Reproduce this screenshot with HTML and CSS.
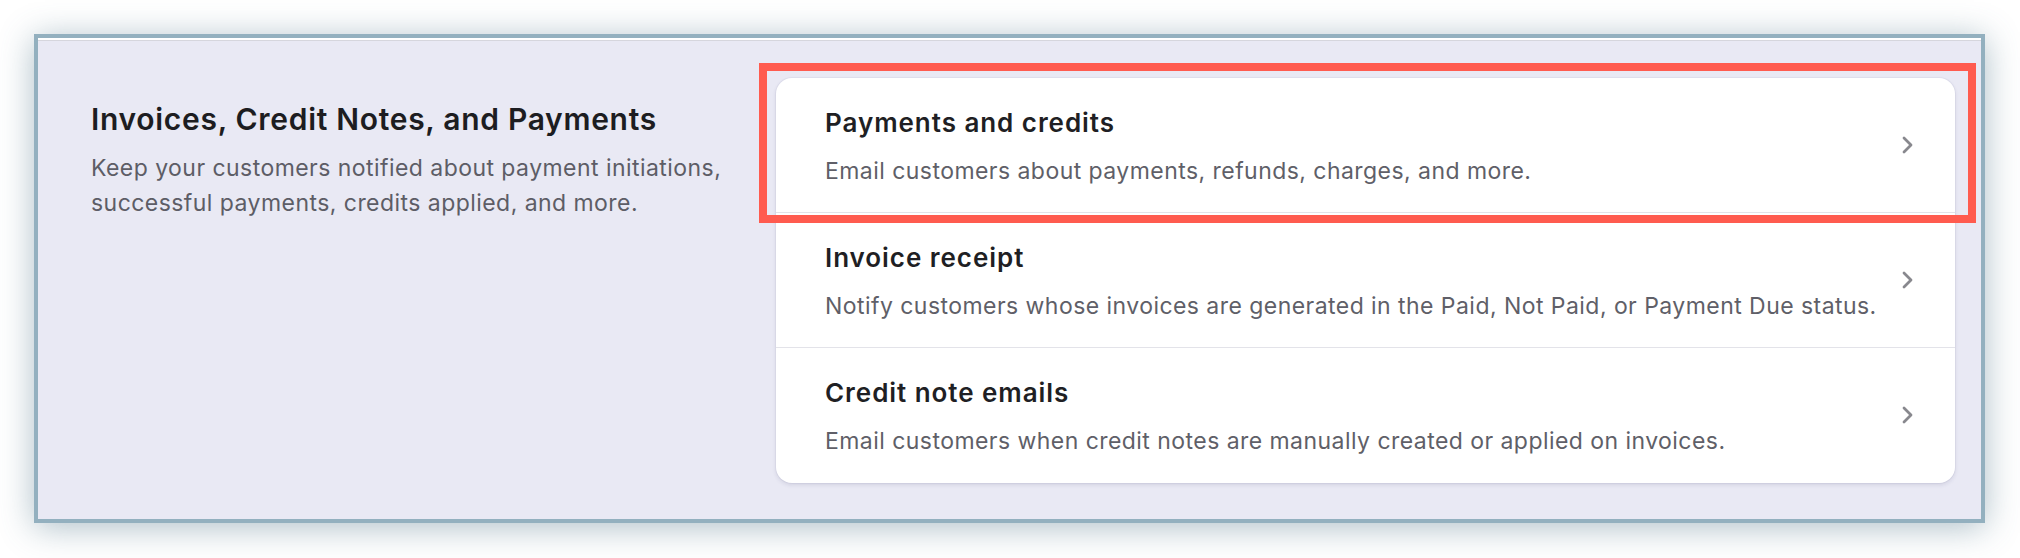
FILE: index.html
```html
<!DOCTYPE html>
<html lang="en">
  <head>
    <meta charset="UTF-8" />
    <meta name="viewport" content="width=device-width, initial-scale=1.0" />
    <link rel="stylesheet" href="styles.css">
  </head>
  <body>
    <div class="frame">
      <div class="section">
        <div class="intro">
          <h2 class="intro-title">Invoices, Credit Notes, and Payments</h2>
          <p class="intro-text">Keep your customers notified about payment initiations, successful payments, credits applied, and more.</p>
        </div>

        <div class="card">
          <a class="row" href="#">
            <div class="row-text">
              <div class="row-title">Payments and credits</div>
              <div class="row-desc">Email customers about payments, refunds, charges, and more.</div>
            </div>
            <svg class="chevron" width="14" height="20" viewBox="0 0 14 20">
              <path d="M3 3l7 7-7 7" />
            </svg>
          </a>
          <a class="row" href="#">
            <div class="row-text">
              <div class="row-title">Invoice receipt</div>
              <div class="row-desc">Notify customers whose invoices are generated in the Paid, Not Paid, or Payment Due status.</div>
            </div>
            <svg class="chevron" width="14" height="20" viewBox="0 0 14 20">
              <path d="M3 3l7 7-7 7" />
            </svg>
          </a>
          <a class="row" href="#">
            <div class="row-text">
              <div class="row-title">Credit note emails</div>
              <div class="row-desc">Email customers when credit notes are manually created or applied on invoices.</div>
            </div>
            <svg class="chevron" width="14" height="20" viewBox="0 0 14 20">
              <path d="M3 3l7 7-7 7" />
            </svg>
          </a>
        </div>
      </div>

      <div class="highlight"></div>
    </div>
  </body>
</html>
```

FILE: styles.css
```css
body {
  margin: 0;
  padding: 34px 35px 35px 34px;
  min-height: 558px;
  box-sizing: border-box;
  background: #fff;
  font-family: Inter, "Noto Sans", sans-serif;
}

.frame {
  position: relative;
  box-sizing: border-box;
  width: 1951px;
  height: 489px;
  border: 4px solid #93b0bf;
  background: #e9e9f4;
  box-shadow: 0 4px 32px rgba(70, 110, 130, 0.45), inset 0 2px 0 #fff, inset 0 3px 0 #d6d6dd;
}

.section {
  display: grid;
  grid-template-columns: 685px 1fr;
  padding: 40px 26px 35px 53px;
}

.intro-title {
  margin: 23px 0 0;
  font-size: 30px;
  line-height: 36px;
  font-weight: 600;
  letter-spacing: 0.7px;
  color: #1d1d21;
}

.intro-text {
  margin: 14px 0 0;
  max-width: 670px;
  font-size: 23px;
  line-height: 35px;
  letter-spacing: 0.45px;
  color: #5d5d66;
}

.card {
  background: #fff;
  border-radius: 16px;
  box-shadow: 0 2px 4px rgba(40, 40, 90, 0.12), 0 0 0 1px rgba(40, 40, 90, 0.04);
}

.row {
  display: flex;
  align-items: center;
  padding: 30px 40px 26px 49px;
  border-bottom: 1px solid #e3e3e9;
  text-decoration: none;
}

.row:last-child {
  border-bottom: none;
  padding-bottom: 27px;
}

.row-text {
  flex: 1;
}

.row-title {
  font-size: 26px;
  line-height: 30px;
  font-weight: 600;
  letter-spacing: 0.95px;
  color: #1f1f24;
}

.row-desc {
  margin-top: 18px;
  font-size: 23px;
  line-height: 30px;
  letter-spacing: 0.45px;
  color: #5f5f68;
}

.chevron {
  margin-top: -5px;
  fill: none;
  stroke: #88888e;
  stroke-width: 2.8;
  stroke-linecap: round;
  stroke-linejoin: round;
}

.highlight {
  position: absolute;
  left: 721px;
  top: 25px;
  width: 1217px;
  height: 160px;
  box-sizing: border-box;
  border: 8px solid #ff5b4f;
}
```
